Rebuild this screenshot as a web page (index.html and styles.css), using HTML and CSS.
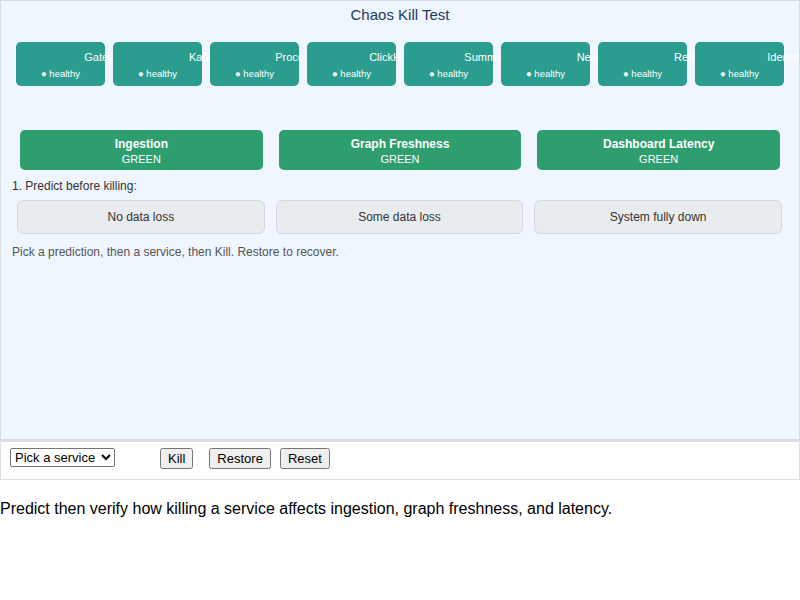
FILE: index.html
```html
<!DOCTYPE html>
<html lang="en">
<head>
    <meta charset="UTF-8">
    <meta name="viewport" content="width=device-width, initial-scale=1.0">
    <title>Chaos Kill Test</title>
    <link rel="stylesheet" href="styles.css">
</head>
<body>
<div class="panel">
    <h2 class="title">Chaos Kill Test</h2>

    <div class="services">
        <div class="service"><div class="service-name">Gateway</div><div class="service-status">&#9679; healthy</div></div>
        <div class="service"><div class="service-name">Kafka</div><div class="service-status">&#9679; healthy</div></div>
        <div class="service"><div class="service-name">Processor</div><div class="service-status">&#9679; healthy</div></div>
        <div class="service"><div class="service-name">ClickHouse</div><div class="service-status">&#9679; healthy</div></div>
        <div class="service"><div class="service-name">Summarizer</div><div class="service-status">&#9679; healthy</div></div>
        <div class="service"><div class="service-name">Neo4j</div><div class="service-status">&#9679; healthy</div></div>
        <div class="service"><div class="service-name">Redis</div><div class="service-status">&#9679; healthy</div></div>
        <div class="service"><div class="service-name">Identity</div><div class="service-status">&#9679; healthy</div></div>
    </div>

    <div class="metrics">
        <div class="metric"><div class="metric-name">Ingestion</div><div class="metric-value">GREEN</div></div>
        <div class="metric"><div class="metric-name">Graph Freshness</div><div class="metric-value">GREEN</div></div>
        <div class="metric"><div class="metric-name">Dashboard Latency</div><div class="metric-value">GREEN</div></div>
    </div>

    <div class="step">1. Predict before killing:</div>
    <div class="predictions">
        <button class="prediction">No data loss</button>
        <button class="prediction">Some data loss</button>
        <button class="prediction">System fully down</button>
    </div>

    <div class="hint">Pick a prediction, then a service, then Kill. Restore to recover.</div>
</div>

<div class="controls">
    <select id="service">
        <option value="">Pick a service</option>
        <option>Gateway</option>
        <option>Kafka</option>
        <option>Processor</option>
        <option>ClickHouse</option>
        <option>Summarizer</option>
        <option>Neo4j</option>
        <option>Redis</option>
        <option>Identity</option>
    </select>
    <button class="kill">Kill</button>
    <button class="restore">Restore</button>
    <button class="reset">Reset</button>
</div>

<p class="caption">Predict then verify how killing a service affects ingestion, graph freshness, and latency.</p>
</body>
</html>
```

FILE: styles.css
```css
body {
    margin: 0;
    font-family: "Liberation Sans", Arial, sans-serif;
}

.panel {
    box-sizing: border-box;
    height: 440px;
    background-color: #eff6ff;
    border: 1px solid #d6dde5;
    padding-top: 5px;
    overflow: hidden;
}

.title {
    margin: 0;
    font-size: 15px;
    line-height: 17px;
    font-weight: normal;
    text-align: center;
    color: #1e3a5f;
}

.services {
    display: flex;
    gap: 8px;
    margin: 19px 0 0 15px;
    height: 88px;
}

.service {
    flex-shrink: 0;
    width: 89px;
    height: 44px;
    box-sizing: border-box;
    padding-top: 8px;
    background-color: #2a9d8f;
    border-radius: 5px;
    color: white;
}

.service-name {
    width: 180px;
    white-space: nowrap;
    text-align: center;
    font-size: 11px;
    line-height: 14px;
}

.service-status {
    margin-top: 4px;
    text-align: center;
    font-size: 9.5px;
    line-height: 12px;
}

.metrics {
    display: grid;
    grid-template-columns: repeat(3, 1fr);
    gap: 16px;
    margin: 0 19px;
}

.metric {
    height: 40px;
    box-sizing: border-box;
    padding-top: 6px;
    background-color: #2e9e6f;
    border-radius: 5px;
    color: white;
    text-align: center;
}

.metric-name {
    font-size: 12px;
    font-weight: bold;
    line-height: 16px;
}

.metric-value {
    font-size: 11px;
    line-height: 14px;
}

.step {
    margin: 8px 0 0 11px;
    font-size: 12px;
    line-height: 16px;
    color: #333;
}

.predictions {
    display: grid;
    grid-template-columns: repeat(3, 1fr);
    gap: 11px;
    margin: 6px 17px 0 16px;
}

.prediction {
    height: 34px;
    background-color: #e9ecef;
    border: 1px solid #d3dae2;
    border-radius: 6px;
    font-family: "Liberation Sans", Arial, sans-serif;
    font-size: 12px;
    color: #333;
}

.hint {
    margin: 10px 0 0 11px;
    font-size: 12px;
    line-height: 16px;
    color: #555;
}

.controls {
    box-sizing: border-box;
    height: 40px;
    display: flex;
    align-items: flex-start;
    padding: 6px 0 0 9px;
    border: 1px solid #dddddd;
    border-top-width: 2px;
    background-color: white;
}

.controls select,
.controls button {
    font-family: "Liberation Sans", Arial, sans-serif;
    font-size: 13px;
}

.controls select {
    width: 105px;
}

.controls button {
    padding: 1px 6px;
}

.kill {
    margin-left: 45px;
}

.restore {
    margin-left: 16px;
}

.reset {
    margin-left: 9px;
}

.caption {
    margin: 20px 0 0 0;
    font-size: 16px;
    line-height: 18px;
}
```
